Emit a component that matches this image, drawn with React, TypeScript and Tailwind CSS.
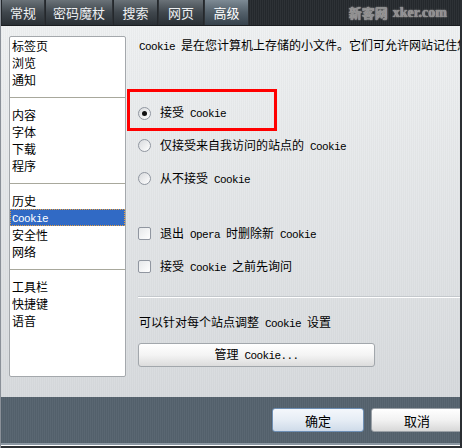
import React from "react";

// split ascii runs so latin gets a narrow mono face like the original dialog
function T({s}: {s: string}) {
    const parts = s.split(/([\x20-\x7e]+)/);
    return (
        <span>
            {parts.map((p, i) =>
                /[\x20-\x7e]/.test(p) ? (
                    <span key={i} className="font-['Liberation_Mono',monospace] text-[11px] tracking-[-0.6px]">{p}</span>
                ) : (
                    <React.Fragment key={i}>{p}</React.Fragment>
                )
            )}
        </span>
    );
}

const tabs = [
    {label: "常规", w: "w-[42px]"},
    {label: "密码魔杖", w: "w-[66px]"},
    {label: "搜索", w: "w-[43px]"},
    {label: "网页", w: "w-[44px]"},
];

const groups = [
    ["标签页", "浏览", "通知"],
    ["内容", "字体", "下载", "程序"],
    ["历史", "Cookie", "安全性", "网络"],
    ["工具栏", "快捷键", "语音"],
];

function Radio({checked, label}: { checked?: boolean; label: string }) {
    return (
        <div className="flex items-center h-[17px]">
            <div
                className="w-[13px] h-[13px] rounded-full border border-[#9096a0] bg-linear-to-br from-[#d8dadd] to-white flex items-center justify-center shrink-0">
                {checked && <div className="w-[5px] h-[5px] rounded-full bg-[#111]"/>}
            </div>
            <span className="ml-[9px]"><T s={label}/></span>
        </div>
    );
}

function Check({label}: { label: string }) {
    return (
        <div className="flex items-center h-[17px]">
            <div className="w-[13px] h-[13px] rounded-[2px] border border-[#9096a0] bg-linear-to-br from-[#e6e8ea] to-white shrink-0"/>
            <span className="ml-[9px]"><T s={label}/></span>
        </div>
    );
}

export default function App() {
    return (
        <div
            className="w-[462px] h-[448px] flex flex-col overflow-hidden border-l border-r-2 border-l-[#8a9098] border-r-[#2b2f33] text-[12px] leading-[15px] text-black font-['Noto_Sans_CJK_SC','Liberation_Sans',sans-serif]">
            {/* tab bar */}
            <div
                className="h-[26px] shrink-0 flex items-stretch gap-[2px] pl-[1px] bg-[repeating-linear-gradient(90deg,#24282c_0px,#24282c_1px,#2e3236_1px,#2e3236_2px)] border-b border-[#1a1d20]">
                {tabs.map((t) => (
                    <div key={t.label}
                         className={`${t.w} flex items-center justify-center text-[#eef0f2] text-[13px] bg-linear-to-b from-[#6a7278] via-[#40474d] to-[#2a3035]`}>
                        {t.label}
                    </div>
                ))}
                <div
                    className="w-[43px] flex items-center justify-center text-white text-[13px] bg-linear-to-b from-[#7d8a94] via-[#53606a] to-[#36424c]">
                    高级
                </div>
                <div
                    className="ml-auto mr-[13px] flex items-center gap-[5px] text-[#8e8e8e] font-bold [text-shadow:0_0_1px_#c8c8c8,0_0_2px_#777]">
                    <span className="text-[13px]">新客网</span>
                    <span className="font-['Liberation_Serif',serif] text-[14px]">xker.com</span>
                </div>
            </div>

            {/* body */}
            <div
                className="flex-1 flex pt-[10px] bg-[repeating-linear-gradient(90deg,rgba(0,0,0,0.025)_0px,rgba(0,0,0,0.025)_1px,transparent_1px,transparent_2px),linear-gradient(#eff1f2,#d8dbde)]">
                <div className="ml-[8px] w-[117px] h-[341px] shrink-0 bg-white border border-[#a4a8ac] rounded-[2px]">
                    {groups.map((g, gi) => (
                        <div key={gi}
                             className={`${gi > 0 ? "border-t border-[#a8a89c] pt-[8px]" : ""} ${gi < groups.length - 1 ? "pb-[9px]" : ""}`}>
                            {g.map((item) =>
                                item === "Cookie" ? (
                                    <div key={item}
                                         className="h-[17px] flex items-center pl-[2px] bg-[#316ac5] text-white outline-1 outline-dotted outline-[#e8a040] -outline-offset-1">
                                        <T s={item}/>
                                    </div>
                                ) : (
                                    <div key={item} className="h-[17px] flex items-center pl-[2px]">{item}</div>
                                )
                            )}
                        </div>
                    ))}
                </div>

                <div className="ml-[12px] flex-1 min-w-0 flex flex-col">
                    <div className="h-[15px] mt-[1px] pl-[1px] whitespace-nowrap overflow-hidden">
                        <T s="Cookie 是在您计算机上存储的小文件。它们可允许网站记住您的设置。"/>
                    </div>

                    <div
                        className="mt-[37px] -ml-[11px] w-[150px] h-[42px] border-[3px] border-[#ff0000] flex items-center pl-[8px] pt-[6px]">
                        <Radio checked label="接受 Cookie"/>
                    </div>
                    <div className="mt-[6px]"><Radio label="仅接受来自我访问的站点的 Cookie"/></div>
                    <div className="mt-[16px]"><Radio label="从不接受 Cookie"/></div>

                    <div className="mt-[38px]"><Check label="退出 Opera 时删除新 Cookie"/></div>
                    <div className="mt-[16px]"><Check label="接受 Cookie 之前先询问"/></div>

                    <div className="mt-[21px] h-[2px] border-t border-[#c4c8cc] border-b border-b-white"/>

                    <div className="mt-[16px] h-[15px] pl-[1px]">
                        <T s="可以针对每个站点调整 Cookie 设置"/>
                    </div>
                    <div
                        className="mt-[14px] w-[237px] h-[24px] rounded-[3px] border border-[#a2a7ac] bg-linear-to-b from-white via-[#f4f4f4] to-[#dcdcdc] flex items-center justify-center">
                        <T s="管理 Cookie..."/>
                    </div>
                </div>
            </div>

            {/* footer */}
            <div className="shrink-0 flex flex-col">
                <div
                    className="h-[46px] flex items-center pl-[271px] gap-[7px] bg-[repeating-linear-gradient(90deg,#53606b_0px,#53606b_1px,#5a6772_1px,#5a6772_2px)]">
                    <div
                        className="w-[92px] h-[24px] shrink-0 rounded-[3px] border border-[#6e8fb4] bg-linear-to-b from-[#f4f7fb] via-[#e6edf5] to-[#cfdbe9] flex items-center justify-center text-[13px]">
                        确定
                    </div>
                    <div
                        className="w-[92px] h-[24px] shrink-0 rounded-[3px] border border-[#9aa0a6] bg-linear-to-b from-white via-[#f2f2f2] to-[#d8d8d8] flex items-center justify-center text-[13px]">
                        取消
                    </div>
                </div>
                <div className="h-[2px] bg-[#8b97a2]"/>
                <div className="h-[1px] bg-white"/>
                <div className="h-[2px] bg-[#2b2f33]"/>
            </div>
        </div>
    );
}
